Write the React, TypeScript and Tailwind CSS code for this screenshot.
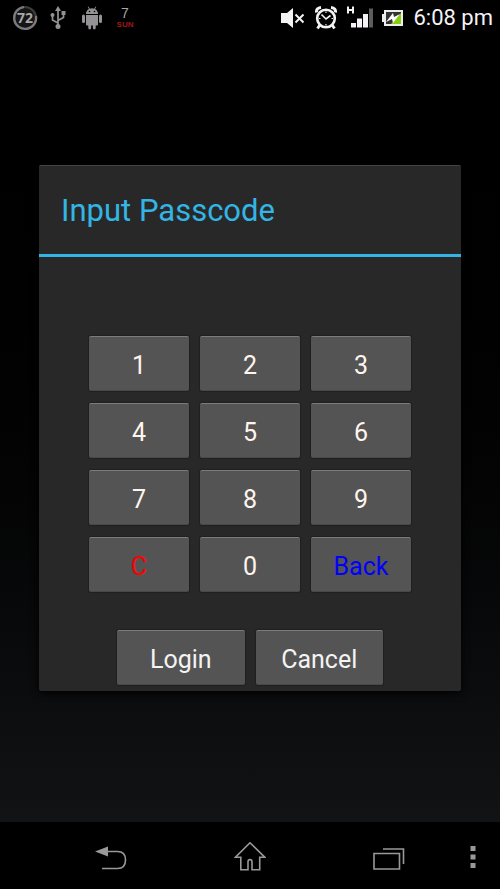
import React, { useState } from 'react';
import clsx from 'clsx';

const keys = ['1', '2', '3', '4', '5', '6', '7', '8', '9', 'C', '0', 'Back'];

const buttonStyle =
  'h-[55px] rounded-xs border-t border-b border-t-[#7c7c7c] border-b-[#484848] bg-[#545454] pt-1 text-[25px] leading-8 shadow-[0_0_1px_1px_#202020]';

const StatusBar = () => (
  <header className="flex h-9 items-center justify-between bg-black pr-[7px] pl-3">
    <div className="flex items-center text-[#949294]">
      <svg width="26" height="26" viewBox="0 0 26 26" role="img" aria-label="Battery level">
        <circle cx="13" cy="13" r="11" fill="#151515" stroke="#3c3c3c" strokeWidth="2.2" />
        <path d="M24 11A11 11 0 1 1 12 2" fill="none" stroke="#7c7a7c" strokeWidth="2.200" />
        <text x="13" y="18" textAnchor="middle" fontFamily="'Noto Sans', sans-serif" fontWeight="700" fontSize="14" fill="#a8a6a8">
          72
        </text>
      </svg>
      <svg className="ml-3" width="16" height="24" viewBox="0 0 16 24" fill="none" stroke="currentColor" strokeWidth="1.7" aria-hidden="true">
        <path d="M8 3v17M8 17l-5.500-3V9M8 14.500l5.500-3V7" />
        <path d="M8 0l3 5H5z" fill="currentColor" stroke="none" />
        <circle cx="8" cy="20.500" r="2.500" fill="currentColor" stroke="none" />
        <circle cx="2.500" cy="9" r="2" fill="currentColor" stroke="none" />
        <path d="M11.500 5h4v4h-4z" fill="currentColor" stroke="none" />
      </svg>
      <svg className="ml-4" width="20" height="24" viewBox="0 0 20 24" fill="currentColor" aria-hidden="true">
        <path d="M4 8C4 5.500 5.200 4 7 3L5.700.8l.7-.4L7.900 2.700a6 6 0 0 1 4.200 0L13.600.4l.7.4L13 3c1.800 1 3 2.500 3 5z" />
        <path d="M4 9h12v9.500q0 1-1 1h-1.300V22a1.400 1.400 0 0 1-2.800 0v-2.500H9.100V22a1.400 1.400 0 0 1-2.800 0v-2.500H5q-1 0-1-1z" />
        <rect x="0" y="8.500" width="3" height="8.500" rx="1.500" />
        <rect x="17" y="8.500" width="3" height="8.500" rx="1.500" />
        <circle cx="7.500" cy="5.500" r=".8" fill="#000" />
        <circle cx="12.500" cy="5.500" r=".8" fill="#000" />
      </svg>
      <div className="ml-3 flex w-[22px] flex-col items-center gap-0.5 font-['Liberation_Sans',sans-serif]">
        <span className="text-[14px] leading-3 text-[#a8a6a8]">7</span>
        <span className="text-[8px] leading-2 font-bold text-[#a01818]">SUN</span>
      </div>
    </div>

    <div className="flex items-center gap-[9px] text-[#f4f2f4]">
      <svg width="25" height="20" viewBox="0 0 25 20" fill="currentColor" aria-hidden="true">
        <path d="M0 5h6l6-5v20l-6-5H0z" />
        <path d="M14.500 6.500l8 8M22.500 6.500l-8 8" stroke="currentColor" strokeWidth="2" />
      </svg>
      <svg width="22" height="24" viewBox="0 0 22 24" fill="none" stroke="currentColor" aria-hidden="true">
        <circle cx="11" cy="12.500" r="8.800" strokeWidth="2.600" />
        <path d="M6.500 8.500l4.500 4.500 4.500-3.500" strokeWidth="1.600" />
        <path d="M1.500 6.500Q1 2 6 1.500M20.500 6.500Q21 2 16 1.500" strokeWidth="3" />
        <path d="M4.500 19.500l-2 3M17.500 19.500l2 3" strokeWidth="2.800" />
        <path d="M11 5.500v1.500M11 18v1.500M4 12.500h1.500M16.500 12.500H18" strokeWidth="1.200" />
      </svg>
      <svg width="27" height="24" viewBox="0 0 27 24" fill="currentColor" aria-hidden="true">
        <path d="M1 .5h2v2.500h3V.5h2v7H6V5H3v2.500H1z" />
        <path d="M5 17h5v4.500H5zM11 12.500h5v9h-5zM17 8h5v13.500h-5z" />
        <path d="M23 2.500h4v19h-4z" fill="#5c5c5c" />
      </svg>
      <svg width="22" height="18" viewBox="0 0 22 18" aria-hidden="true">
        <path d="M2 1h19v16H2v-4H0V5h2z" fill="#eeecee" />
        <path d="M4 3h15v12H4z" fill="#343434" />
        <path d="M19 4v11H9z" fill="#84d010" />
        <path d="M4 13l7-9 1 4 6-3-7 9-1-4z" fill="#fff" />
      </svg>
      <time className="text-[22px] leading-8">6:08 pm</time>
    </div>
  </header>
);

const NavBar = () => (
  <nav className="flex h-[67px] bg-black pt-0.5 pl-[42px] text-[#999]">
    <div className="grid flex-1 grid-cols-3">
      <button type="button" aria-label="Back" className="flex items-center justify-center">
        <svg width="32" height="28" viewBox="0 0 32 28" fill="none" stroke="currentColor" strokeWidth="1.600">
          <path d="M12 8.500h10.500C28 8.500 30.500 11 30.500 17S28 25.500 22.500 25.500H7" />
          <path d="M0 8.500l13-5v10z" fill="currentColor" stroke="none" />
        </svg>
      </button>
      <button type="button" aria-label="Home" className="flex items-center justify-center">
        <svg width="32" height="30" viewBox="0 0 32 30" fill="none" stroke="currentColor" strokeWidth="1.600">
          <path d="M16 .8L1.500 15.200h5.300v12.600h7.200v-8q0-2.200 2-2.200t2 2.200v8h7.700V15.200h5z" />
        </svg>
      </button>
      <button type="button" aria-label="Recent apps" className="flex items-center justify-center">
        <svg width="32" height="28" viewBox="0 0 32 28" fill="none" stroke="currentColor" strokeWidth="1.600">
          <path d="M1 10.500h25.500v15.500H1zM10 6h20.500v15" />
        </svg>
      </button>
    </div>
    <button type="button" aria-label="More options" className="flex w-[42px] items-center justify-center pr-3">
      <svg width="6" height="22" viewBox="0 0 6 22" fill="currentColor">
        <path d="M.5 0h5v5h-5zM.5 8.500h5v5h-5zM.5 17h5v5h-5z" />
      </svg>
    </button>
  </nav>
);

const App = () => {
  const [, setPasscode] = useState('');

  const press = (key: string) => {
    if (key === 'C') setPasscode('');
    else if (key === 'Back') setPasscode((prev) => prev.slice(0, -1));
    else setPasscode((prev) => prev + key);
  };

  return (
    <div className="flex min-h-screen flex-col bg-black font-[Roboto,sans-serif]">
      <StatusBar />
      <main className="flex flex-1 items-center justify-center bg-linear-to-b from-black to-[#121315] px-[39px] pb-0.5">
        <section
          role="dialog"
          aria-labelledby="title"
          className="w-full max-w-lg rounded-xs border-t border-[#444] bg-[#282828] pb-1.5 shadow-[0_2px_8px_#000]"
        >
          <h1 id="title" className="border-b-3 border-[#33b5e5] px-[22px] pt-[25px] pb-[23px] text-[31px] leading-10 text-[#33b5e5]">
            Input Passcode
          </h1>
          <div className="mt-[79px] grid grid-cols-3 gap-x-[11px] gap-y-3 px-[50px]">
            {keys.map((key) => (
              <button
                key={key}
                type="button"
                onClick={() => press(key)}
                className={clsx(
                  buttonStyle,
                  key === 'C' && 'text-[#ff0000]',
                  key === 'Back' && 'text-[#0000ff]',
                  key.length === 1 && key !== 'C' && 'text-[#fff5ee]'
                )}
              >
                {key}
              </button>
            ))}
          </div>
          <div className="mt-[38px] grid grid-cols-2 gap-[11px] px-[78px]">
            <button type="button" className={clsx(buttonStyle, 'text-[#f3f3f3]')}>Login</button>
            <button type="button" className={clsx(buttonStyle, 'text-[#f3f3f3]')}>Cancel</button>
          </div>
        </section>
      </main>
      <NavBar />
    </div>
  );
};

export default App;
